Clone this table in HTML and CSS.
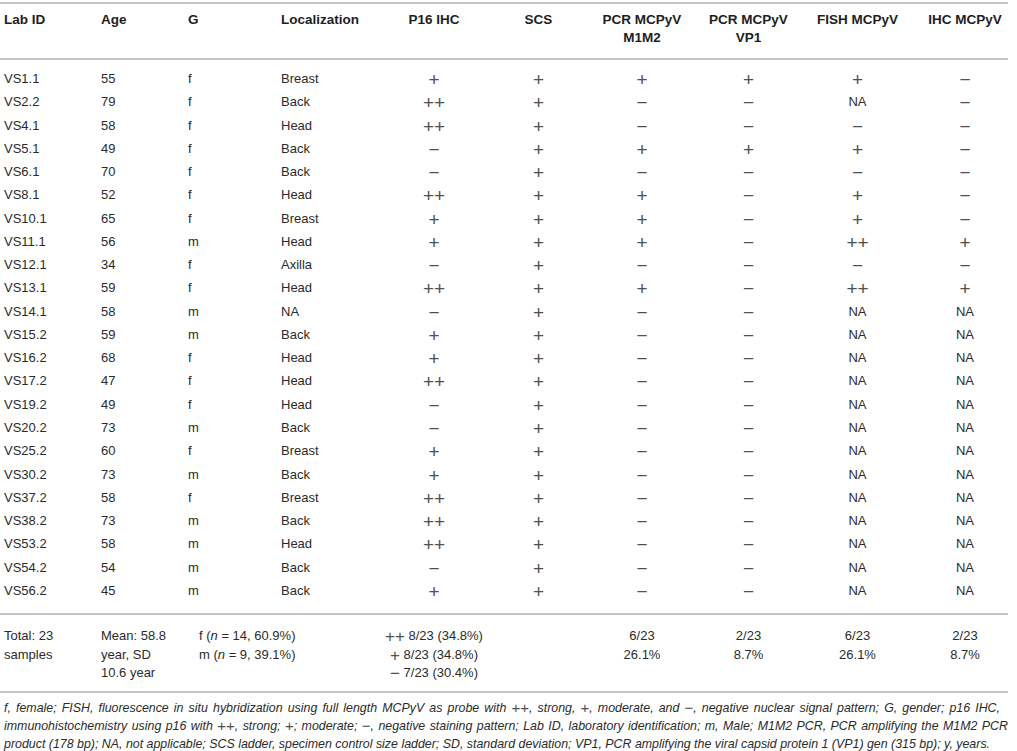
FILE: index.html
```html
<!DOCTYPE html>
<html lang="en">
<head>
<meta charset="utf-8">
<title>Table</title>
<link rel="stylesheet" href="styles.css">
</head>
<body>
<div class="table">
  <div class="row head">
    <div class="cell l">Lab ID</div>
    <div class="cell l">Age</div>
    <div class="cell l">G</div>
    <div class="cell l">Localization</div>
    <div class="cell c"><span>P16 IHC</span></div>
    <div class="cell c"><span>SCS</span></div>
    <div class="cell c"><span>PCR MCPyV<br>M1M2</span></div>
    <div class="cell c"><span>PCR MCPyV<br>VP1</span></div>
    <div class="cell c"><span>FISH MCPyV</span></div>
    <div class="cell c last"><span>IHC MCPyV</span></div>
  </div>
  <div class="body">
    <div class="row"><div class="cell l">VS1.1</div><div class="cell l">55</div><div class="cell l">f</div><div class="cell l">Breast</div><div class="cell c"><span class="s">+</span></div><div class="cell c"><span class="s">+</span></div><div class="cell c"><span class="s">+</span></div><div class="cell c"><span class="s">+</span></div><div class="cell c"><span class="s">+</span></div><div class="cell c last"><span class="s">−</span></div></div>
    <div class="row"><div class="cell l">VS2.2</div><div class="cell l">79</div><div class="cell l">f</div><div class="cell l">Back</div><div class="cell c"><span class="s">++</span></div><div class="cell c"><span class="s">+</span></div><div class="cell c"><span class="s">−</span></div><div class="cell c"><span class="s">−</span></div><div class="cell c">NA</div><div class="cell c last"><span class="s">−</span></div></div>
    <div class="row"><div class="cell l">VS4.1</div><div class="cell l">58</div><div class="cell l">f</div><div class="cell l">Head</div><div class="cell c"><span class="s">++</span></div><div class="cell c"><span class="s">+</span></div><div class="cell c"><span class="s">−</span></div><div class="cell c"><span class="s">−</span></div><div class="cell c"><span class="s">−</span></div><div class="cell c last"><span class="s">−</span></div></div>
    <div class="row"><div class="cell l">VS5.1</div><div class="cell l">49</div><div class="cell l">f</div><div class="cell l">Back</div><div class="cell c"><span class="s">−</span></div><div class="cell c"><span class="s">+</span></div><div class="cell c"><span class="s">+</span></div><div class="cell c"><span class="s">+</span></div><div class="cell c"><span class="s">+</span></div><div class="cell c last"><span class="s">−</span></div></div>
    <div class="row"><div class="cell l">VS6.1</div><div class="cell l">70</div><div class="cell l">f</div><div class="cell l">Back</div><div class="cell c"><span class="s">−</span></div><div class="cell c"><span class="s">+</span></div><div class="cell c"><span class="s">−</span></div><div class="cell c"><span class="s">−</span></div><div class="cell c"><span class="s">−</span></div><div class="cell c last"><span class="s">−</span></div></div>
    <div class="row"><div class="cell l">VS8.1</div><div class="cell l">52</div><div class="cell l">f</div><div class="cell l">Head</div><div class="cell c"><span class="s">++</span></div><div class="cell c"><span class="s">+</span></div><div class="cell c"><span class="s">+</span></div><div class="cell c"><span class="s">−</span></div><div class="cell c"><span class="s">+</span></div><div class="cell c last"><span class="s">−</span></div></div>
    <div class="row"><div class="cell l">VS10.1</div><div class="cell l">65</div><div class="cell l">f</div><div class="cell l">Breast</div><div class="cell c"><span class="s">+</span></div><div class="cell c"><span class="s">+</span></div><div class="cell c"><span class="s">+</span></div><div class="cell c"><span class="s">−</span></div><div class="cell c"><span class="s">+</span></div><div class="cell c last"><span class="s">−</span></div></div>
    <div class="row"><div class="cell l">VS11.1</div><div class="cell l">56</div><div class="cell l">m</div><div class="cell l">Head</div><div class="cell c"><span class="s">+</span></div><div class="cell c"><span class="s">+</span></div><div class="cell c"><span class="s">+</span></div><div class="cell c"><span class="s">−</span></div><div class="cell c"><span class="s">++</span></div><div class="cell c last"><span class="s">+</span></div></div>
    <div class="row"><div class="cell l">VS12.1</div><div class="cell l">34</div><div class="cell l">f</div><div class="cell l">Axilla</div><div class="cell c"><span class="s">−</span></div><div class="cell c"><span class="s">+</span></div><div class="cell c"><span class="s">−</span></div><div class="cell c"><span class="s">−</span></div><div class="cell c"><span class="s">−</span></div><div class="cell c last"><span class="s">−</span></div></div>
    <div class="row"><div class="cell l">VS13.1</div><div class="cell l">59</div><div class="cell l">f</div><div class="cell l">Head</div><div class="cell c"><span class="s">++</span></div><div class="cell c"><span class="s">+</span></div><div class="cell c"><span class="s">+</span></div><div class="cell c"><span class="s">−</span></div><div class="cell c"><span class="s">++</span></div><div class="cell c last"><span class="s">+</span></div></div>
    <div class="row"><div class="cell l">VS14.1</div><div class="cell l">58</div><div class="cell l">m</div><div class="cell l">NA</div><div class="cell c"><span class="s">−</span></div><div class="cell c"><span class="s">+</span></div><div class="cell c"><span class="s">−</span></div><div class="cell c"><span class="s">−</span></div><div class="cell c">NA</div><div class="cell c last">NA</div></div>
    <div class="row"><div class="cell l">VS15.2</div><div class="cell l">59</div><div class="cell l">m</div><div class="cell l">Back</div><div class="cell c"><span class="s">+</span></div><div class="cell c"><span class="s">+</span></div><div class="cell c"><span class="s">−</span></div><div class="cell c"><span class="s">−</span></div><div class="cell c">NA</div><div class="cell c last">NA</div></div>
    <div class="row"><div class="cell l">VS16.2</div><div class="cell l">68</div><div class="cell l">f</div><div class="cell l">Head</div><div class="cell c"><span class="s">+</span></div><div class="cell c"><span class="s">+</span></div><div class="cell c"><span class="s">−</span></div><div class="cell c"><span class="s">−</span></div><div class="cell c">NA</div><div class="cell c last">NA</div></div>
    <div class="row"><div class="cell l">VS17.2</div><div class="cell l">47</div><div class="cell l">f</div><div class="cell l">Head</div><div class="cell c"><span class="s">++</span></div><div class="cell c"><span class="s">+</span></div><div class="cell c"><span class="s">−</span></div><div class="cell c"><span class="s">−</span></div><div class="cell c">NA</div><div class="cell c last">NA</div></div>
    <div class="row"><div class="cell l">VS19.2</div><div class="cell l">49</div><div class="cell l">f</div><div class="cell l">Head</div><div class="cell c"><span class="s">−</span></div><div class="cell c"><span class="s">+</span></div><div class="cell c"><span class="s">−</span></div><div class="cell c"><span class="s">−</span></div><div class="cell c">NA</div><div class="cell c last">NA</div></div>
    <div class="row"><div class="cell l">VS20.2</div><div class="cell l">73</div><div class="cell l">m</div><div class="cell l">Back</div><div class="cell c"><span class="s">−</span></div><div class="cell c"><span class="s">+</span></div><div class="cell c"><span class="s">−</span></div><div class="cell c"><span class="s">−</span></div><div class="cell c">NA</div><div class="cell c last">NA</div></div>
    <div class="row"><div class="cell l">VS25.2</div><div class="cell l">60</div><div class="cell l">f</div><div class="cell l">Breast</div><div class="cell c"><span class="s">+</span></div><div class="cell c"><span class="s">+</span></div><div class="cell c"><span class="s">−</span></div><div class="cell c"><span class="s">−</span></div><div class="cell c">NA</div><div class="cell c last">NA</div></div>
    <div class="row"><div class="cell l">VS30.2</div><div class="cell l">73</div><div class="cell l">m</div><div class="cell l">Back</div><div class="cell c"><span class="s">+</span></div><div class="cell c"><span class="s">+</span></div><div class="cell c"><span class="s">−</span></div><div class="cell c"><span class="s">−</span></div><div class="cell c">NA</div><div class="cell c last">NA</div></div>
    <div class="row"><div class="cell l">VS37.2</div><div class="cell l">58</div><div class="cell l">f</div><div class="cell l">Breast</div><div class="cell c"><span class="s">++</span></div><div class="cell c"><span class="s">+</span></div><div class="cell c"><span class="s">−</span></div><div class="cell c"><span class="s">−</span></div><div class="cell c">NA</div><div class="cell c last">NA</div></div>
    <div class="row"><div class="cell l">VS38.2</div><div class="cell l">73</div><div class="cell l">m</div><div class="cell l">Back</div><div class="cell c"><span class="s">++</span></div><div class="cell c"><span class="s">+</span></div><div class="cell c"><span class="s">−</span></div><div class="cell c"><span class="s">−</span></div><div class="cell c">NA</div><div class="cell c last">NA</div></div>
    <div class="row"><div class="cell l">VS53.2</div><div class="cell l">58</div><div class="cell l">m</div><div class="cell l">Head</div><div class="cell c"><span class="s">++</span></div><div class="cell c"><span class="s">+</span></div><div class="cell c"><span class="s">−</span></div><div class="cell c"><span class="s">−</span></div><div class="cell c">NA</div><div class="cell c last">NA</div></div>
    <div class="row"><div class="cell l">VS54.2</div><div class="cell l">54</div><div class="cell l">m</div><div class="cell l">Back</div><div class="cell c"><span class="s">−</span></div><div class="cell c"><span class="s">+</span></div><div class="cell c"><span class="s">−</span></div><div class="cell c"><span class="s">−</span></div><div class="cell c">NA</div><div class="cell c last">NA</div></div>
    <div class="row"><div class="cell l">VS56.2</div><div class="cell l">45</div><div class="cell l">m</div><div class="cell l">Back</div><div class="cell c"><span class="s">+</span></div><div class="cell c"><span class="s">+</span></div><div class="cell c"><span class="s">−</span></div><div class="cell c"><span class="s">−</span></div><div class="cell c">NA</div><div class="cell c last">NA</div></div>
  </div>
  <div class="row total">
    <div class="cell l">Total: 23<br>samples</div>
    <div class="cell l">Mean: 58.8<br>year, SD<br>10.6 year</div>
    <div class="cell l span2 gtot">f (<i>n</i> = 14, 60.9%)<br>m (<i>n</i> = 9, 39.1%)</div>
    <div class="cell c"><span><span class="s">++</span> 8/23 (34.8%)<br><span class="s">+</span> 8/23 (34.8%)<br><span class="s">−</span> 7/23 (30.4%)</span></div>
    <div class="cell c"><span></span></div>
    <div class="cell c"><span>6/23<br>26.1%</span></div>
    <div class="cell c"><span>2/23<br>8.7%</span></div>
    <div class="cell c"><span>6/23<br>26.1%</span></div>
    <div class="cell c last"><span>2/23<br>8.7%</span></div>
  </div>
</div>
<div class="note">
  <span class="nl w1">f, female; FISH, fluorescence in situ hybridization using full length MCPyV as probe with <span class="s">++</span>, strong, <span class="s">+</span>, moderate, and <span class="s">−</span>, negative nuclear signal pattern; G, gender; p16 IHC,</span>
  <span class="nl w2">immunohistochemistry using p16 with <span class="s">++</span>, strong; <span class="s">+</span>; moderate; <span class="s">−</span>, negative staining pattern; Lab ID, laboratory identification; m, Male; M1M2 PCR, PCR amplifying the M1M2 PCR</span>
  <span class="nl">product (178 bp); NA, not applicable; SCS ladder, specimen control size ladder; SD, standard deviation; VP1, PCR amplifying the viral capsid protein 1 (VP1) gen (315 bp); y, years.</span>
</div>
</body>
</html>
```
FILE: styles.css
```css
html, body {
  margin: 0;
  padding: 0;
  background: #ffffff;
}
body {
  font-family: "Liberation Sans", Arial, sans-serif;
  color: #2b2b2b;
  font-size: 13px;
  padding-top: 2px;
}
.table {
  width: 1008px;
  border-top: 2px solid #c4c4c4;
  border-bottom: 2px solid #c4c4c4;
}
.row {
  display: grid;
  grid-template-columns: 97px 87px 93px 104px 106px 103px 104px 109px 109px 96px;
  white-space: nowrap;
}
.cell {
  padding-left: 4px;
}
.cell.c {
  display: flex;
  justify-content: center;
  padding-left: 0;
  text-align: center;
}
.cell.c.last {
  padding-left: 10px;
}
.body .cell.c {
  display: block;
}
.s {
  font-family: "Liberation Sans", Arial, sans-serif;
  font-weight: normal;
  font-size: 19px;
  line-height: 0;
  font-style: normal;
  vertical-align: -2.5px;
  color: #505050;
}
.head {
  font-weight: bold;
  font-size: 13.5px;
  color: #1e1e1e;
  line-height: 18px;
  padding-top: 7px;
  padding-bottom: 11px;
  border-bottom: 2px solid #c4c4c4;
}
.body {
  padding-top: 7px;
  padding-bottom: 11px;
  border-bottom: 2px solid #c4c4c4;
}
.body .row {
  height: 23.27px;
  line-height: 23.27px;
}
.total {
  line-height: 18.5px;
  padding-top: 12px;
  padding-bottom: 8px;
}
.total .s {
  font-size: 17px;
  vertical-align: -2px;
}
.gtot {
  padding-left: 15px;
}
.span2 {
  grid-column: span 2;
}
.note {
  padding: 6px 0 0 4px;
  font-style: italic;
  font-size: 12.4px;
  line-height: 18px;
  white-space: nowrap;
  color: #2b2b2b;
}
.note .s {
  font-size: 15px;
  vertical-align: -1px;
}
.nl {
  display: block;
}
.w1 {
  width: 996px;
  text-align: justify;
  text-align-last: justify;
}
.w2 {
  width: 1004px;
  text-align: justify;
  text-align-last: justify;
}
```
